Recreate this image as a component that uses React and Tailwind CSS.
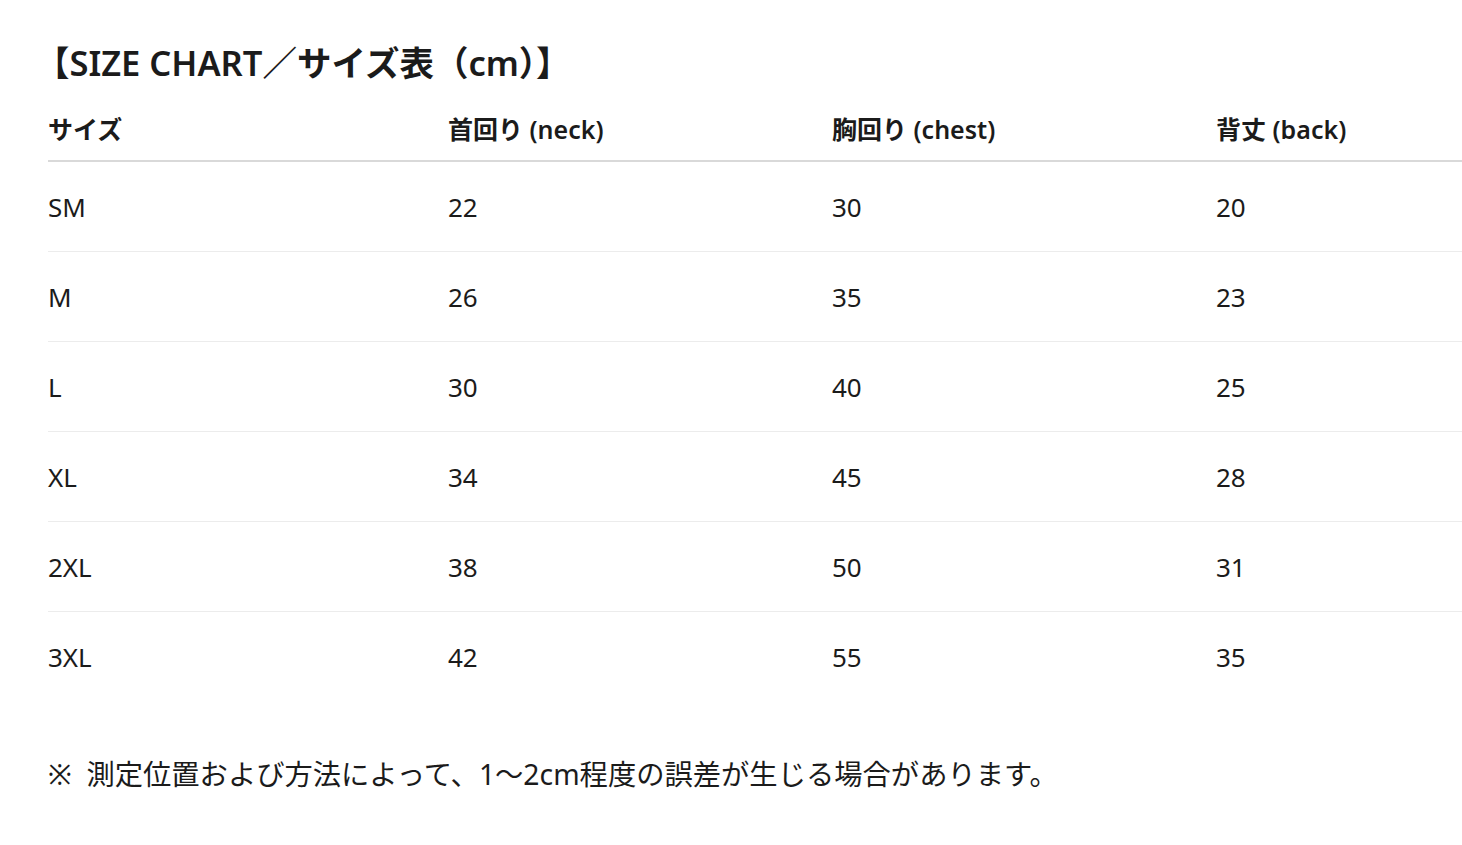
import React from "react";

const rows = [
  ["SM", "22", "30", "20"],
  ["M", "26", "35", "23"],
  ["L", "30", "40", "25"],
  ["XL", "34", "45", "28"],
  ["2XL", "38", "50", "31"],
  ["3XL", "42", "55", "35"],
];

const font = { fontFamily: '"Noto Sans", "Noto Sans CJK JP", sans-serif' };

export default function App() {
  return (
    <div className="min-h-[845px] w-[1462px] bg-white text-[#1b1b1b] pl-[48px] pt-[40px]" style={font}>
      <h1 className="h-[46px] flex items-center text-[34.5px] font-semibold -ml-[13px]">
        【SIZE CHART／サイズ表（cm）】
      </h1>
      <div className="mt-[13px]">
        <div className="grid grid-cols-[400px_384px_384px_1fr] h-[63px] items-center border-b-2 border-[#d9d9d9] text-[25px] font-semibold">
          <div>サイズ</div>
          <div>首回り (neck)</div>
          <div>胸回り (chest)</div>
          <div>背丈 (back)</div>
        </div>
        {rows.map((r, i) => (
          <div
            key={r[0]}
            className={
              i < rows.length - 1
                ? "grid grid-cols-[400px_384px_384px_1fr] h-[90px] items-center border-b border-[#ececec] text-[26px] pt-[1px]"
                : "grid grid-cols-[400px_384px_384px_1fr] h-[90px] items-center text-[26px] pt-[1px]"
            }
          >
            {r.map((c, j) => (
              <div key={j}>{c}</div>
            ))}
          </div>
        ))}
      </div>
      <p className="mt-[52px] text-[28.3px] leading-[40px]">
        ※&nbsp;&nbsp;測定位置および方法によって、1〜2cm程度の誤差が生じる場合があります。
      </p>
    </div>
  );
}
